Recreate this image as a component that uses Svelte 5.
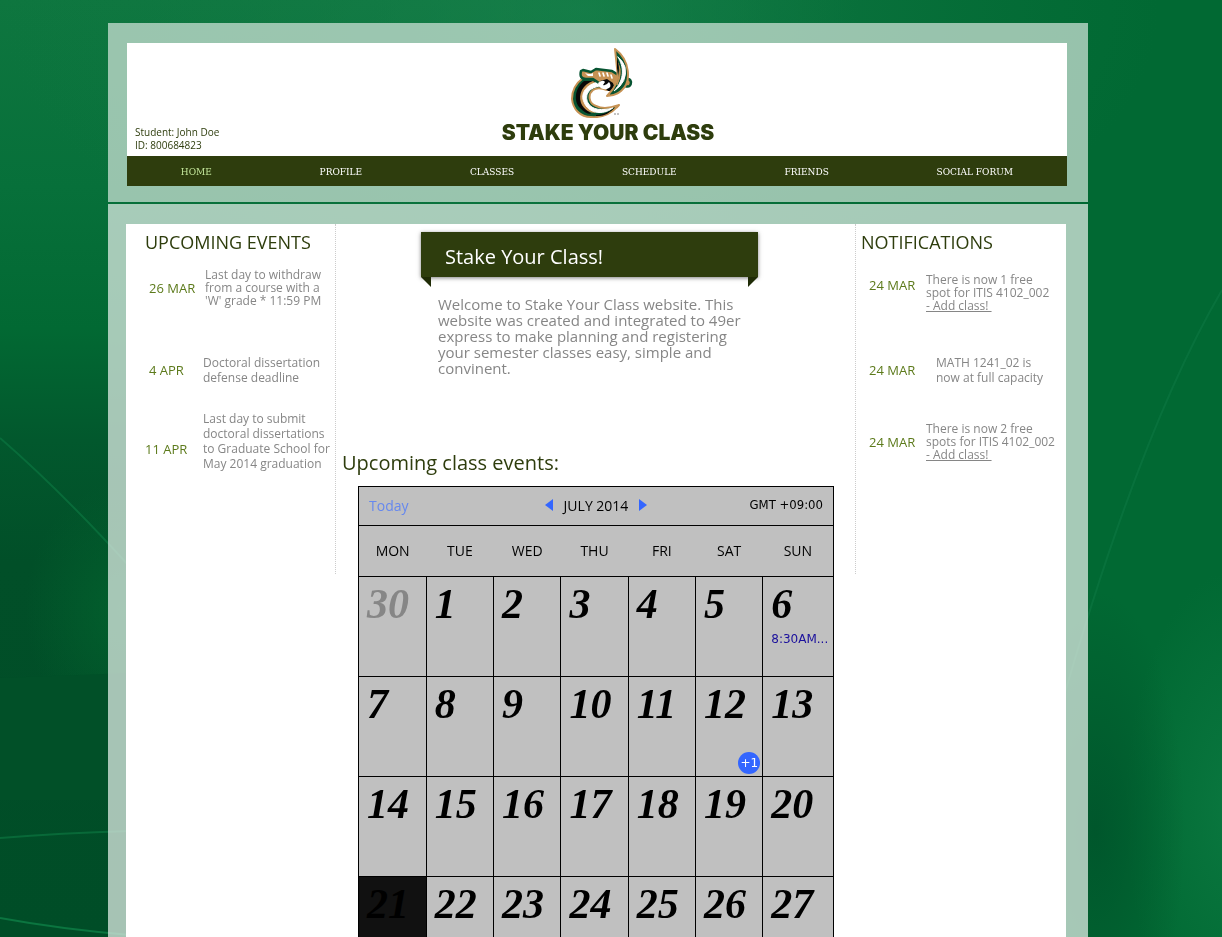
<script>
  const nav = ['HOME', 'PROFILE', 'CLASSES', 'SCHEDULE', 'FRIENDS', 'SOCIAL FORUM'];
  const weekdays = ['MON', 'TUE', 'WED', 'THU', 'FRI', 'SAT', 'SUN'];
  const weeks = [
    [30, 1, 2, 3, 4, 5, 6],
    [7, 8, 9, 10, 11, 12, 13],
    [14, 15, 16, 17, 18, 19, 20],
    [21, 22, 23, 24, 25, 26, 27]
  ];
</script>

<div class="page">
  <svg class="backdrop" viewBox="0 0 1222 937" preserveAspectRatio="none" aria-hidden="true">
    <defs>
      <linearGradient id="base" x1="0" y1="0" x2="0" y2="1">
        <stop offset="0" stop-color="#0e763f" />
        <stop offset=".2" stop-color="#07703a" />
        <stop offset=".35" stop-color="#026933" />
        <stop offset=".47" stop-color="#02582d" />
        <stop offset=".6" stop-color="#014f28" />
        <stop offset="1" stop-color="#004d27" />
      </linearGradient>
      <radialGradient id="glow"><stop offset="0" stop-color="#1b8450" /><stop offset="1" stop-color="#147a45" stop-opacity="0" /></radialGradient>
      <radialGradient id="light"><stop offset="0" stop-color="#03652f" /><stop offset="1" stop-color="#03652f" stop-opacity="0" /></radialGradient>
      <radialGradient id="sheen"><stop offset="0" stop-color="#0a773f" /><stop offset="1" stop-color="#0a773f" stop-opacity="0" /></radialGradient>
      <radialGradient id="shade"><stop offset="0" stop-color="#00522a" /><stop offset="1" stop-color="#00522a" stop-opacity="0" /></radialGradient>
      <linearGradient id="right"><stop offset="0" stop-color="#016933" stop-opacity="0" /><stop offset=".5" stop-color="#016933" /><stop offset="1" stop-color="#016933" /></linearGradient>
    </defs>
    <rect width="1222" height="937" fill="url(#base)" />
    <rect x="500" width="722" height="937" fill="url(#right)" />
    <ellipse cx="580" cy="10" rx="580" ry="300" fill="url(#glow)" opacity=".6" />
    <ellipse cx="125" cy="610" rx="100" ry="130" fill="url(#light)" opacity=".75" />
    <path d="M0 678L130 673V800H0Z" fill="#015028" />
    <ellipse cx="1235" cy="810" rx="110" ry="240" fill="url(#sheen)" />
    <ellipse cx="1095" cy="830" rx="90" ry="240" fill="url(#shade)" opacity=".8" />
    <g fill="none" stroke="#0b7540" stroke-width="2">
      <path d="M0 438Q60 490 130 567" opacity=".7" />
      <path d="M0 838Q60 833 130 831" opacity=".7" />
      <path d="M0 918Q60 929 130 935" />
      <path d="M1060 710Q1140 430 1222 290" opacity=".7" />
    </g>
  </svg>

  <div class="site">
    <header>
      <div class="masthead">
        <p class="student">Student: John Doe<br />ID: 800684823</p>
        <div class="brand">
          <svg class="logo" viewBox="0 0 62 70" role="img" aria-label="Charlotte 49ers">
            <g stroke-linejoin="round" stroke-linecap="round">
              <path d="M12 30C4 36 1 44 1 51C2 61 9 69 20 69C32 70 42 64 48 57C40 60 31 61 25 58C17 55 17 46 22 42C26 39 31 40 36 42L43 38L30 30Z" fill="#075432" stroke="#c69254" stroke-width="2" />
              <path d="M13 33C3 41 3 54 9 60C12 63 16 66 20 66L12 57C8 48 12 38 24 33Z" fill="#080808" />
              <path d="M22 33C12 36 7 46 10 55C13 62 19 65 25 65L15 57L14 46L26 36Z" fill="#c69254" />
              <path d="M28 34C15 36 9 46 13 54C17 65 31 68 42 60C31 63 21 62 17 55C13 47 18 39 30 38L36 40L38 37Z" fill="#fff" stroke="#fff" />
              <path d="M25 67Q35 67 44 59Q36 69 25 68Z" fill="#080808" />
              <path d="M10 23Q8 31 15 31L22 31L28 35L40 38L54 38Q60 40 60 34Q59 30 54 31L41 23L25 21L20 24L12 22Z" fill="#c69254" stroke="#075432" stroke-width="2.5" />
              <path d="M14 25Q19 27 22 25L22 28L17 28Z" fill="#fff" />
              <path d="M28 25L29 28M32 25L33 28M36 25L37 28M40 27L41 30" fill="none" stroke="#fff" stroke-width="1.6" />
              <path d="M29 33L36 31L42 35L44 43L37 43L33 39Z" fill="#080808" />
              <path d="M27 35Q32 31 34 34L32 37Q35 38 38 34Q42 39 36 41Q31 42 28 38Z" fill="#fff" />
              <path d="M44 1C59 12 61 34 50 43Q44 48 36 48L42 41Q48 32 46 20Z" fill="#075432" stroke="#c69254" stroke-width="2" />
              <path d="M47 9C53 19 54 31 43 43Q57 34 54 19Q52 13 47 9Z" fill="#fff" stroke="#fff" />
              <path d="M47 15Q52 25 46 37L49 22Z" fill="#c69254" stroke="#c69254" />
              <path d="M46 10Q49 18 47 27L46 20Z" fill="#080808" />
            </g>
            <path d="M43 66H45M46 66H48" stroke="#888" stroke-width="1" />
          </svg>
          <h1>STAKE YOUR CLASS</h1>
        </div>
      </div>
      <nav>
        {#each nav as item, i}
          <a href="#{item.toLowerCase().replace(' ', '-')}" class:current={i === 0}>{item}</a>
        {/each}
      </nav>
    </header>

    <main>
      <div class="columns">
        <aside class="events">
          <h2>UPCOMING EVENTS</h2>
          <ul>
            <li class="tight first"><time>26 MAR</time><p class="wide">Last day to withdraw<br />from a course with a<br />'W' grade * 11:59 PM</p></li>
            <li><time>4 APR</time><p>Doctoral dissertation<br />defense deadline</p></li>
            <li class="low"><time>11 APR</time><p>Last day to submit<br />doctoral dissertations<br />to Graduate School for<br />May 2014 graduation</p></li>
          </ul>
        </aside>

        <section class="center">
          <div class="ribbon"><h2>Stake Your Class!</h2></div>
          <p class="welcome">Welcome to Stake Your Class website. This website was created and integrated to 49er express to make planning and registering your semester classes easy, simple and convinent.</p>
          <h2 class="subhead">Upcoming class events:</h2>
          <div class="calendar">
            <div class="toolbar">
              <button class="today">Today</button>
              <div class="month">
                <button aria-label="Previous month"><svg viewBox="0 0 8 12" width="8" height="12"><path d="M8 0V12L0 6Z" /></svg></button>
                <span>JULY 2014</span>
                <button aria-label="Next month"><svg viewBox="0 0 8 12" width="8" height="12"><path d="M0 0V12L8 6Z" /></svg></button>
              </div>
              <span class="zone">GMT +09:00</span>
            </div>
            <table>
              <thead>
                <tr>{#each weekdays as d}<th scope="col">{d}</th>{/each}</tr>
              </thead>
              <tbody>
                {#each weeks as week}
                  <tr>
                    {#each week as day}
                      <td class:faded={day === 30} class:selected={day === 21}>
                        <span class="num">{day}</span>
                        {#if day === 6}<a class="slot" href="#event">8:30AM...</a>{/if}
                        {#if day === 12}<button class="more">+1</button>{/if}
                      </td>
                    {/each}
                  </tr>
                {/each}
              </tbody>
            </table>
          </div>
        </section>

        <aside class="notes">
          <h2>NOTIFICATIONS</h2>
          <ul>
            <li class="tight high"><time>24 MAR</time><p>There is now 1 free<br />spot for ITIS 4102_002<br /><a href="#add-1">- Add class!&nbsp;</a></p></li>
            <li><time>24 MAR</time><p class="inset">MATH 1241_02 is<br />now at full capacity</p></li>
            <li class="tight last"><time>24 MAR</time><p>There is now 2 free<br />spots for ITIS 4102_002<br /><a href="#add-2">- Add class!&nbsp;</a></p></li>
          </ul>
        </aside>
      </div>
    </main>
  </div>
</div>

<style>
  :global(html) { scrollbar-width: none; }
  :global(body) { background: #066b39; }
  * { box-sizing: border-box; }
  h1, h2, p, ul { margin: 0; padding: 0; font-weight: 400; }
  ul { list-style: none; }
  button { border: 0; padding: 0; background: none; font: inherit; cursor: pointer; }

  .page {
    position: relative;
    min-height: 100vh;
    padding: 23px 26px 0 0;
    font-family: "Open Sans", "Noto Sans", sans-serif;
    color: #2e3d0d;
  }
  .backdrop { position: fixed; inset: 0; width: 100%; height: 100%; }
  .site { position: relative; max-width: 980px; margin: 0 auto; }

  header { padding: 20px 21px 16px 19px; background: rgba(202, 224, 212, .75); }
  .masthead {
    display: grid;
    grid-template-columns: 1fr auto 1fr;
    align-items: end;
    min-height: 113px;
    padding: 0 0 4px 8px;
    background: #fff;
  }
  .student { font-size: 10px; line-height: 13px; }
  .brand { display: flex; flex-direction: column; align-items: center; padding: 5px 0 5px 14px; }
  .logo { width: 62px; height: 70px; margin-right: 12px; }
  h1 { font: 900 21px/29px Inter, "Liberation Sans", sans-serif; }

  nav {
    display: flex;
    justify-content: space-around;
    align-items: center;
    height: 30px;
    padding-top: 1px;
    background: #2e3d0d;
  }
  nav a {
    color: #fff;
    font: 10px/16px "DejaVu Serif Condensed", "DejaVu Serif", serif;
    text-decoration: none;
  }
  nav a.current { color: #c3e69b; }

  main { margin-top: 2px; padding: 20px 22px 0 18px; background: rgba(222, 235, 228, .75); }
  .columns {
    display: grid;
    grid-template-columns: 210px 1fr 211px;
    min-height: 780px;
    background: #fff;
  }
  aside { height: 350px; }
  aside h2 { font-size: 18px; line-height: 36px; }
  .events { border-right: 1px dotted #ccc; }
  .events h2 { padding-left: 19px; }
  .notes { border-left: 1px dotted #ccc; }
  .notes h2 { padding-left: 5px; }
  aside li { display: flex; align-items: center; margin-top: 43px; }
  aside time { flex: none; font-size: 13px; line-height: 18px; color: #5c7a1b; }
  aside p { font-size: 12px; line-height: 15px; color: #868686; }
  aside .tight p { line-height: 13px; }
  aside p a { color: inherit; }
  .events li { margin-top: 48px; }
  .events time { width: 54px; margin-left: 23px; }
  .events .first { margin-top: 8px; }
  .events .low { margin-top: 26px; align-items: end; }
  .events .low time { width: 58px; margin-left: 19px; padding-bottom: 12px; line-height: 20px; }
  .events .wide { padding-left: 2px; }
  .notes time { width: 57px; margin-left: 13px; }
  .notes .high { margin-top: 13px; align-items: start; }
  .notes .high time { padding-top: 3px; }
  .notes .last { margin-top: 37px; }
  .notes .inset { padding-left: 10px; }

  .center { padding: 8px 21px 0 22px; }
  .ribbon {
    position: relative;
    width: 337px;
    height: 45px;
    margin-left: 63px;
    padding: 9px 24px;
    background: #2e3d0d;
    box-shadow: 0 1px 4px rgba(0, 0, 0, .5);
  }
  .ribbon::before, .ribbon::after {
    content: "";
    position: absolute;
    top: 100%;
    width: 10px;
    height: 10px;
    background: #1f2b06;
  }
  .ribbon::before { left: 0; clip-path: polygon(0 0, 100% 0, 100% 100%); }
  .ribbon::after { right: 0; clip-path: polygon(0 0, 100% 0, 0 100%); }
  .ribbon h2 { font-size: 20px; line-height: 32px; color: #fff; }
  .welcome { width: 310px; margin-left: 80px; padding-top: 19px; font-size: 15px; line-height: 16px; color: #868686; }
  .subhead { margin: 71px 0 0 -16px; font-size: 20px; line-height: 32px; }

  .calendar { margin-top: 7px; border: 1px solid #000; background: #c0c0c0; color: #000; }
  .toolbar {
    display: grid;
    grid-template-columns: 1fr auto 1fr;
    align-items: center;
    height: 38px;
    padding: 0 10px 2px;
    font-size: 14px;
  }
  .today { justify-self: start; color: #6688ee; }
  .month { display: flex; align-items: center; gap: 11px; }
  .month button { display: flex; }
  .month path { fill: #3366ff; }
  .zone { justify-self: end; font: 13px/18px "DejaVu Sans Condensed", "Noto Sans", sans-serif; }
  table { width: 100%; border-collapse: collapse; table-layout: fixed; }
  th { width: 14.2%; height: 51px; padding: 0 0 2px; border-top: 1px solid #000; font-size: 14px; font-weight: 400; }
  th:last-child { width: auto; }
  td {
    position: relative;
    height: 100px;
    padding: 5px 0 0 8px;
    border: solid #000;
    border-width: 1px 0 0 1px;
    vertical-align: top;
  }
  td:first-child { border-left: 0; }
  .num { display: block; font: italic bold 42px/44px "Liberation Serif", serif; }
  .faded { color: #868686; }
  .selected { background: #111; }
  .slot { display: block; padding-top: 5px; font: 12px/16px "DejaVu Sans", sans-serif; color: #1a0f9c; text-decoration: none; white-space: nowrap; }
  .more {
    position: absolute;
    right: 2px;
    bottom: 2px;
    width: 22px;
    height: 22px;
    border-radius: 50%;
    background: #3366ff;
    color: #fff;
    font: 12px/22px "DejaVu Sans", sans-serif;
  }
</style>
